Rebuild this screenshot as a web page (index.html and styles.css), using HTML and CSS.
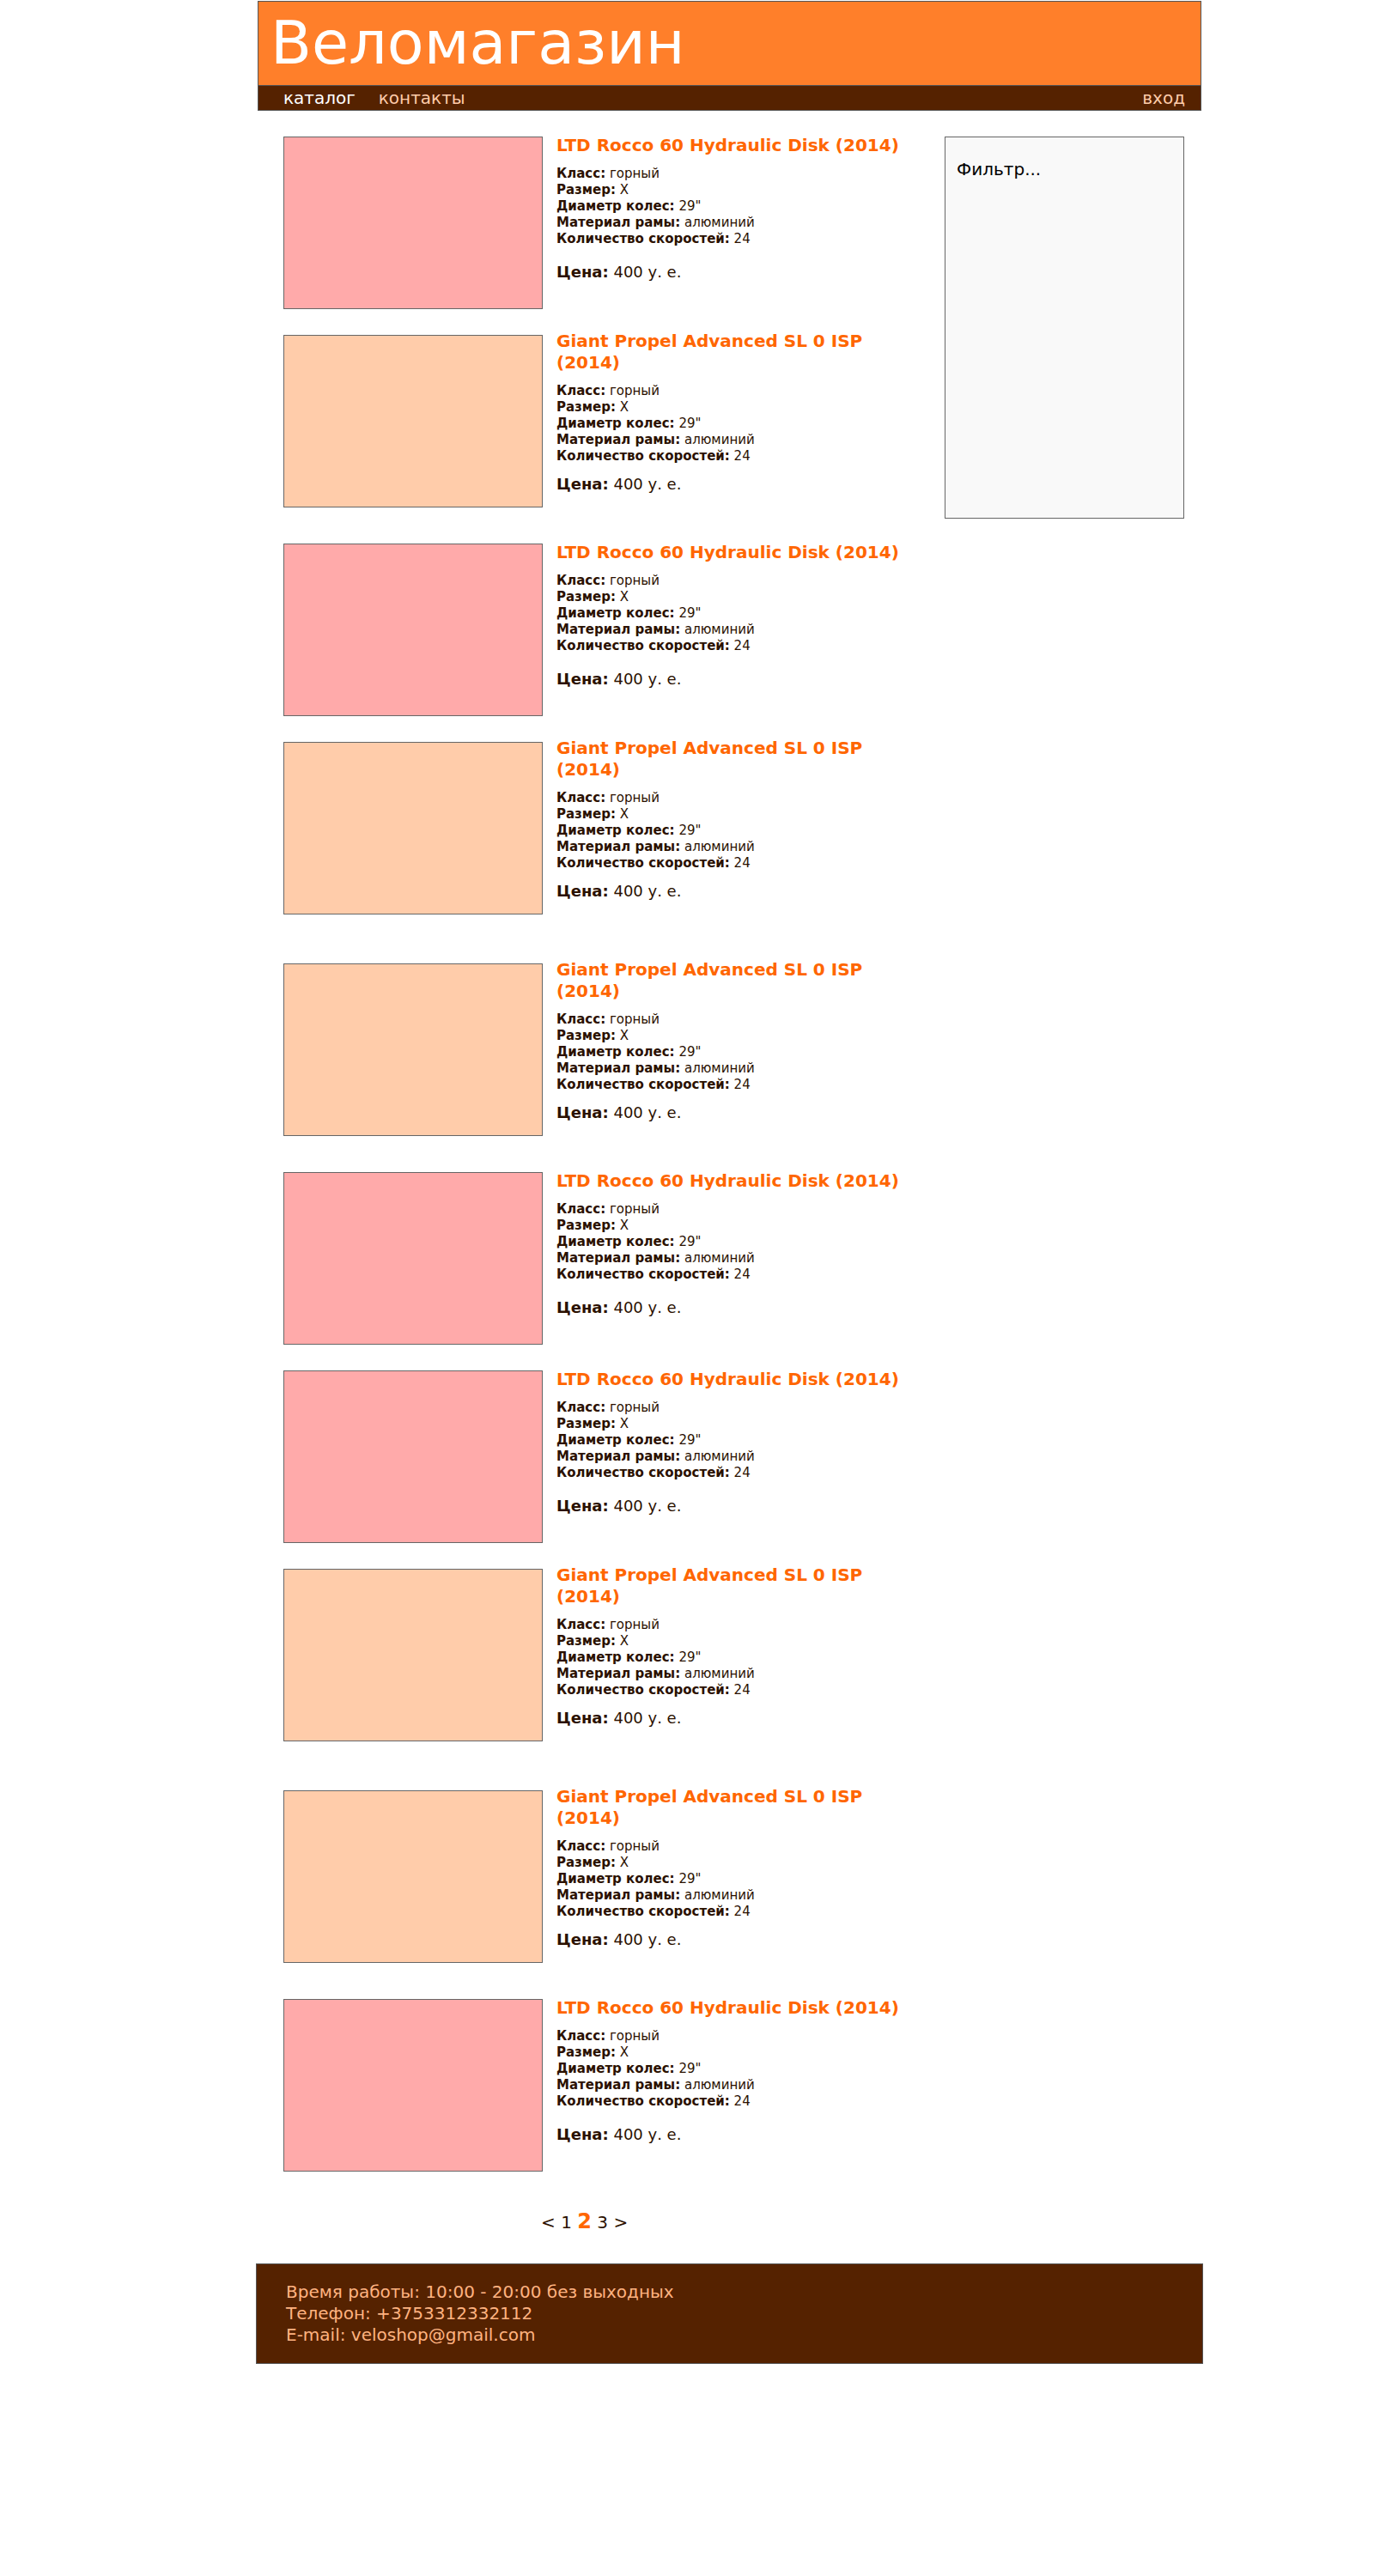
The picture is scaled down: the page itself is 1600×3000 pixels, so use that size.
FILE: index.html
```
<!DOCTYPE html>
<html lang="ru">
<head>
<meta charset="utf-8">
<title>Веломагазин</title>
<link rel="stylesheet" href="styles.css">
</head>
<body>
<div class="page">
  <header class="header">
    <h1 class="header__title">Веломагазин</h1>
  </header>
  <nav class="nav">
    <a class="nav__link nav__link--active" href="#catalog">каталог</a>
    <a class="nav__link" href="#contacts">контакты</a>
    <a class="nav__link nav__link--login" href="#login">вход</a>
  </nav>

  <main class="main" id="catalog">
    <section class="products">
      <article class="product product--ltd">
        <div class="product__photo"></div>
        <div class="product__info">
          <h2 class="product__name">LTD Rocco 60 Hydraulic Disk (2014)</h2>
          <ul class="specs">
            <li><b>Класс:</b> горный</li>
            <li><b>Размер:</b> X</li>
            <li><b>Диаметр колес:</b> 29"</li>
            <li><b>Материал рамы:</b> алюминий</li>
            <li><b>Количество скоростей:</b> 24</li>
          </ul>
          <p class="price"><b>Цена:</b> 400 у. е.</p>
        </div>
      </article>
      <article class="product product--giant">
        <div class="product__photo"></div>
        <div class="product__info">
          <h2 class="product__name">Giant Propel Advanced SL 0 ISP (2014)</h2>
          <ul class="specs">
            <li><b>Класс:</b> горный</li>
            <li><b>Размер:</b> X</li>
            <li><b>Диаметр колес:</b> 29"</li>
            <li><b>Материал рамы:</b> алюминий</li>
            <li><b>Количество скоростей:</b> 24</li>
          </ul>
          <p class="price"><b>Цена:</b> 400 у. е.</p>
        </div>
      </article>
      <article class="product product--ltd">
        <div class="product__photo"></div>
        <div class="product__info">
          <h2 class="product__name">LTD Rocco 60 Hydraulic Disk (2014)</h2>
          <ul class="specs">
            <li><b>Класс:</b> горный</li>
            <li><b>Размер:</b> X</li>
            <li><b>Диаметр колес:</b> 29"</li>
            <li><b>Материал рамы:</b> алюминий</li>
            <li><b>Количество скоростей:</b> 24</li>
          </ul>
          <p class="price"><b>Цена:</b> 400 у. е.</p>
        </div>
      </article>
      <article class="product product--giant">
        <div class="product__photo"></div>
        <div class="product__info">
          <h2 class="product__name">Giant Propel Advanced SL 0 ISP (2014)</h2>
          <ul class="specs">
            <li><b>Класс:</b> горный</li>
            <li><b>Размер:</b> X</li>
            <li><b>Диаметр колес:</b> 29"</li>
            <li><b>Материал рамы:</b> алюминий</li>
            <li><b>Количество скоростей:</b> 24</li>
          </ul>
          <p class="price"><b>Цена:</b> 400 у. е.</p>
        </div>
      </article>
      <article class="product product--giant">
        <div class="product__photo"></div>
        <div class="product__info">
          <h2 class="product__name">Giant Propel Advanced SL 0 ISP (2014)</h2>
          <ul class="specs">
            <li><b>Класс:</b> горный</li>
            <li><b>Размер:</b> X</li>
            <li><b>Диаметр колес:</b> 29"</li>
            <li><b>Материал рамы:</b> алюминий</li>
            <li><b>Количество скоростей:</b> 24</li>
          </ul>
          <p class="price"><b>Цена:</b> 400 у. е.</p>
        </div>
      </article>
      <article class="product product--ltd">
        <div class="product__photo"></div>
        <div class="product__info">
          <h2 class="product__name">LTD Rocco 60 Hydraulic Disk (2014)</h2>
          <ul class="specs">
            <li><b>Класс:</b> горный</li>
            <li><b>Размер:</b> X</li>
            <li><b>Диаметр колес:</b> 29"</li>
            <li><b>Материал рамы:</b> алюминий</li>
            <li><b>Количество скоростей:</b> 24</li>
          </ul>
          <p class="price"><b>Цена:</b> 400 у. е.</p>
        </div>
      </article>
      <article class="product product--ltd">
        <div class="product__photo"></div>
        <div class="product__info">
          <h2 class="product__name">LTD Rocco 60 Hydraulic Disk (2014)</h2>
          <ul class="specs">
            <li><b>Класс:</b> горный</li>
            <li><b>Размер:</b> X</li>
            <li><b>Диаметр колес:</b> 29"</li>
            <li><b>Материал рамы:</b> алюминий</li>
            <li><b>Количество скоростей:</b> 24</li>
          </ul>
          <p class="price"><b>Цена:</b> 400 у. е.</p>
        </div>
      </article>
      <article class="product product--giant">
        <div class="product__photo"></div>
        <div class="product__info">
          <h2 class="product__name">Giant Propel Advanced SL 0 ISP (2014)</h2>
          <ul class="specs">
            <li><b>Класс:</b> горный</li>
            <li><b>Размер:</b> X</li>
            <li><b>Диаметр колес:</b> 29"</li>
            <li><b>Материал рамы:</b> алюминий</li>
            <li><b>Количество скоростей:</b> 24</li>
          </ul>
          <p class="price"><b>Цена:</b> 400 у. е.</p>
        </div>
      </article>
      <article class="product product--giant">
        <div class="product__photo"></div>
        <div class="product__info">
          <h2 class="product__name">Giant Propel Advanced SL 0 ISP (2014)</h2>
          <ul class="specs">
            <li><b>Класс:</b> горный</li>
            <li><b>Размер:</b> X</li>
            <li><b>Диаметр колес:</b> 29"</li>
            <li><b>Материал рамы:</b> алюминий</li>
            <li><b>Количество скоростей:</b> 24</li>
          </ul>
          <p class="price"><b>Цена:</b> 400 у. е.</p>
        </div>
      </article>
      <article class="product product--ltd">
        <div class="product__photo"></div>
        <div class="product__info">
          <h2 class="product__name">LTD Rocco 60 Hydraulic Disk (2014)</h2>
          <ul class="specs">
            <li><b>Класс:</b> горный</li>
            <li><b>Размер:</b> X</li>
            <li><b>Диаметр колес:</b> 29"</li>
            <li><b>Материал рамы:</b> алюминий</li>
            <li><b>Количество скоростей:</b> 24</li>
          </ul>
          <p class="price"><b>Цена:</b> 400 у. е.</p>
        </div>
      </article>

      <nav class="pagination">
        <a class="pagination__link" href="#page-1">&lt;</a>
        <a class="pagination__link" href="#page-1">1</a>
        <a class="pagination__link pagination__link--current" href="#page-2">2</a>
        <a class="pagination__link" href="#page-3">3</a>
        <a class="pagination__link" href="#page-3">&gt;</a>
      </nav>
    </section>

    <aside class="filter">Фильтр...</aside>
  </main>

  <footer class="footer" id="contacts">
    <p class="footer__line">Время работы: 10:00 - 20:00 без выходных</p>
    <p class="footer__line">Телефон: +3753312332112</p>
    <p class="footer__line">E-mail: veloshop@gmail.com</p>
  </footer>
</div>
</body>
</html>
```
FILE: styles.css
```
* {
  box-sizing: border-box;
}

body {
  margin: 0;
  background: #fff;
  color: #2b1100;
  font: 20px/25px "DejaVu Sans", Verdana, sans-serif;
}

h1, h2, p, ul {
  margin: 0;
  padding: 0;
}

a {
  color: inherit;
  text-decoration: none;
}

.page {
  margin: 0 12.5% 0 18.75%;
  padding: 1px 1px 0 0;
}

.header {
  padding: 0 14px 1px;
  border: 1px solid #555;
  background: #ff7f2a;
  color: #fff;
}

.header__title {
  font-size: 70px;
  line-height: 96px;
  font-weight: normal;
}

.nav {
  display: flex;
  gap: 27px;
  padding: 0 18px 0 29px;
  border: 1px solid #555;
  border-top: 0;
  background: #520;
  color: #fca;
  line-height: 28px;
}

.nav__link--active {
  color: #fff;
}

.nav__link--login {
  margin-left: auto;
}

.main {
  display: flex;
  align-items: flex-start;
  gap: 30px;
  padding: 25px 20px 33px 30px;
}

.products {
  flex: 1;
}

.product {
  display: flex;
  gap: 16px;
}

.product + .product {
  margin-top: 25px;
}

.product--giant + .product {
  margin-top: 37px;
}

.product--giant + .product--giant {
  margin-top: 52px;
}

.product__photo {
  flex: none;
  width: 302px;
  height: 201px;
  margin-top: 5px;
  border: 1px solid #666;
  background: #faa;
}

.product--giant .product__photo {
  background: #fca;
}

.product__info {
  flex: 1;
}

.product--ltd .product__info {
  padding-top: 3px;
}

.product__name {
  margin-bottom: 11px;
  color: #f60;
  font-size: 20px;
  line-height: 25px;
}

.specs {
  margin-bottom: 11px;
  font-size: 15px;
  line-height: 19px;
  list-style: none;
}

.product--ltd .specs {
  margin-bottom: 17px;
}

.price {
  font-size: 18px;
  line-height: 23px;
}

.pagination {
  padding: 43px 0 0 300px;
  line-height: 30px;
}

.pagination__link--current {
  color: #f60;
  font-size: 24px;
  font-weight: bold;
}

.filter {
  flex: none;
  width: 279px;
  min-height: 445px;
  margin-top: 5px;
  padding: 25px 13px;
  border: 1px solid #666;
  background: #f9f9f9;
  color: #000;
}

.footer {
  margin: 0 -2px;
  padding: 20px 34px;
  border: 1px solid #555;
  background: #520;
  color: #ffb380;
}
```
